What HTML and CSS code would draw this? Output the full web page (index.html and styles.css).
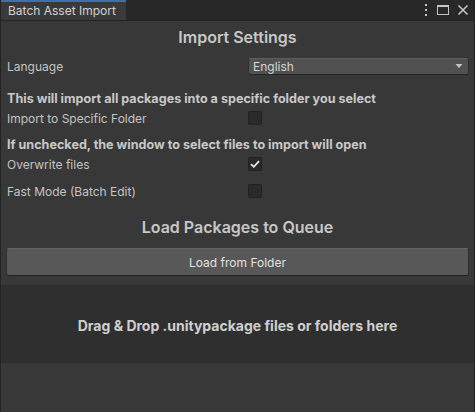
FILE: index.html
```html
<!DOCTYPE html>
<html lang="en">
<head>
<meta charset="utf-8">
<title>Batch Asset Import</title>
<link rel="stylesheet" href="styles.css">
</head>
<body>
<div class="window">
  <div class="tabbar">
    <div class="tab">Batch Asset Import</div>
    <div class="tab-actions">
      <svg class="icon" width="6" height="14" viewBox="0 0 6 14">
        <rect x="2" y="1" width="2" height="2" fill="#c4c4c4"/>
        <rect x="2" y="6" width="2" height="2" fill="#c4c4c4"/>
        <rect x="2" y="11" width="2" height="2" fill="#c4c4c4"/>
      </svg>
      <svg class="icon" width="12" height="12" viewBox="0 0 12 12">
        <rect x="0.5" y="1.5" width="11" height="9" fill="none" stroke="#c4c4c4" stroke-width="1"/>
        <rect x="0.5" y="1.5" width="11" height="1.5" fill="#c4c4c4"/>
      </svg>
      <svg class="icon" width="12" height="12" viewBox="0 0 12 12">
        <path d="M1.5 1.5 L10.5 10.5 M10.5 1.5 L1.5 10.5" stroke="#c4c4c4" stroke-width="1.6" fill="none"/>
      </svg>
    </div>
  </div>

  <div class="content">
    <h1 class="section-title">Import Settings</h1>

    <div class="field">
      <span class="label">Language</span>
      <div class="dropdown">
        <span>English</span>
        <svg width="8" height="6" viewBox="0 0 8 6"><path d="M0.5 1 L7.5 1 L4 5 Z" fill="#c4c4c4"/></svg>
      </div>
    </div>

    <p class="hint hint-first">This will import all packages into a specific folder you select</p>
    <div class="field">
      <span class="label">Import to Specific Folder</span>
      <span class="checkbox"></span>
    </div>

    <p class="hint">If unchecked, the window to select files to import will open</p>
    <div class="field">
      <span class="label">Overwrite files</span>
      <span class="checkbox checked">
        <svg width="10" height="8" viewBox="0 0 10 8"><path d="M1 4.2 L3.8 6.8 L9 1.2" stroke="#e6e6e6" stroke-width="1.8" fill="none"/></svg>
      </span>
    </div>
    <div class="field field-spaced">
      <span class="label">Fast Mode (Batch Edit)</span>
      <span class="checkbox"></span>
    </div>

    <h2 class="section-title queue-title">Load Packages to Queue</h2>
    <button class="button" type="button">Load from Folder</button>
  </div>

  <div class="dropzone">Drag &amp; Drop .unitypackage files or folders here</div>
</div>
</body>
</html>
```

FILE: styles.css
```css
html, body {
  margin: 0;
  padding: 0;
  height: 100%;
  background: #383838;
}

body {
  font-family: Inter, "Noto Sans", "Liberation Sans", sans-serif;
  font-size: 12px;
  color: #c4c4c4;
}

.window {
  height: 412px;
  display: flex;
  flex-direction: column;
  background: #383838;
  border-left: 1px solid #232323;
  border-right: 1px solid #232323;
  box-sizing: border-box;
  overflow: hidden;
}

/* Editor window tab strip */
.tabbar {
  height: 21px;
  flex: none;
  display: flex;
  align-items: stretch;
  background: #282828;
  border-bottom: 1px solid #232323;
  box-sizing: border-box;
}

.tab {
  width: 125px;
  background: #3a3a3a;
  border-top: 2px solid #3a72b0;
  box-sizing: border-box;
  padding-left: 7px;
  line-height: 18px;
  font-size: 12px;
  color: #d2d2d2;
  white-space: nowrap;
}

.tab-actions {
  margin-left: auto;
  display: flex;
  align-items: center;
  gap: 8px;
  padding-right: 5px;
}

.icon {
  display: block;
}

/* Settings panel */
.content {
  padding: 0 5px 0 5px;
  display: flex;
  flex-direction: column;
}

.section-title {
  margin: 6px 0 0 0;
  text-align: center;
  font-size: 16px;
  font-weight: 600;
  line-height: 20px;
  color: #c8c8c8;
}

.queue-title {
  margin-top: 17px;
  font-size: 16px;
}

.field {
  display: grid;
  grid-template-columns: 242px 1fr;
  align-items: center;
  height: 18px;
  margin-top: 2px;
}

.field:first-of-type {
  margin-top: 10px;
}

.field-spaced {
  margin-top: 9px;
}

.label {
  padding-left: 1px;
  color: #c4c4c4;
  white-space: nowrap;
}

.dropdown {
  height: 17px;
  display: flex;
  align-items: center;
  justify-content: space-between;
  padding: 0 5px 0 4px;
  background: #515151;
  border: 1px solid #303030;
  border-top-color: #5e5e5e;
  border-bottom-color: #242424;
  border-radius: 3px;
  color: #d4d4d4;
  box-sizing: border-box;
}

.hint {
  margin: 10px 0 0 0;
  padding-left: 1px;
  font-size: 12.6px;
  font-weight: 700;
  line-height: 16px;
  color: #c8c8c8;
  white-space: nowrap;
}

.hint-first {
  margin-top: 16px;
}

.checkbox {
  width: 14px;
  height: 14px;
  box-sizing: border-box;
  background: #2a2a2a;
  border: 1px solid #212121;
  border-radius: 2px;
  display: flex;
  align-items: center;
  justify-content: center;
  margin-left: 0;
}

.button {
  margin-top: 11px;
  height: 28px;
  width: 100%;
  background: #585858;
  border: 1px solid #303030;
  border-top-color: #656565;
  border-bottom-color: #242424;
  border-radius: 3px;
  font-family: inherit;
  font-size: 12px;
  color: #e2e2e2;
  cursor: pointer;
}

/* Drop target area */
.dropzone {
  margin-top: 9px;
  height: 78px;
  flex: none;
  background: #2f2f30;
  display: flex;
  align-items: center;
  justify-content: center;
  font-size: 14px;
  font-weight: 700;
  color: #cfcfcf;
  padding-top: 3px;
  box-sizing: border-box;
}
```
